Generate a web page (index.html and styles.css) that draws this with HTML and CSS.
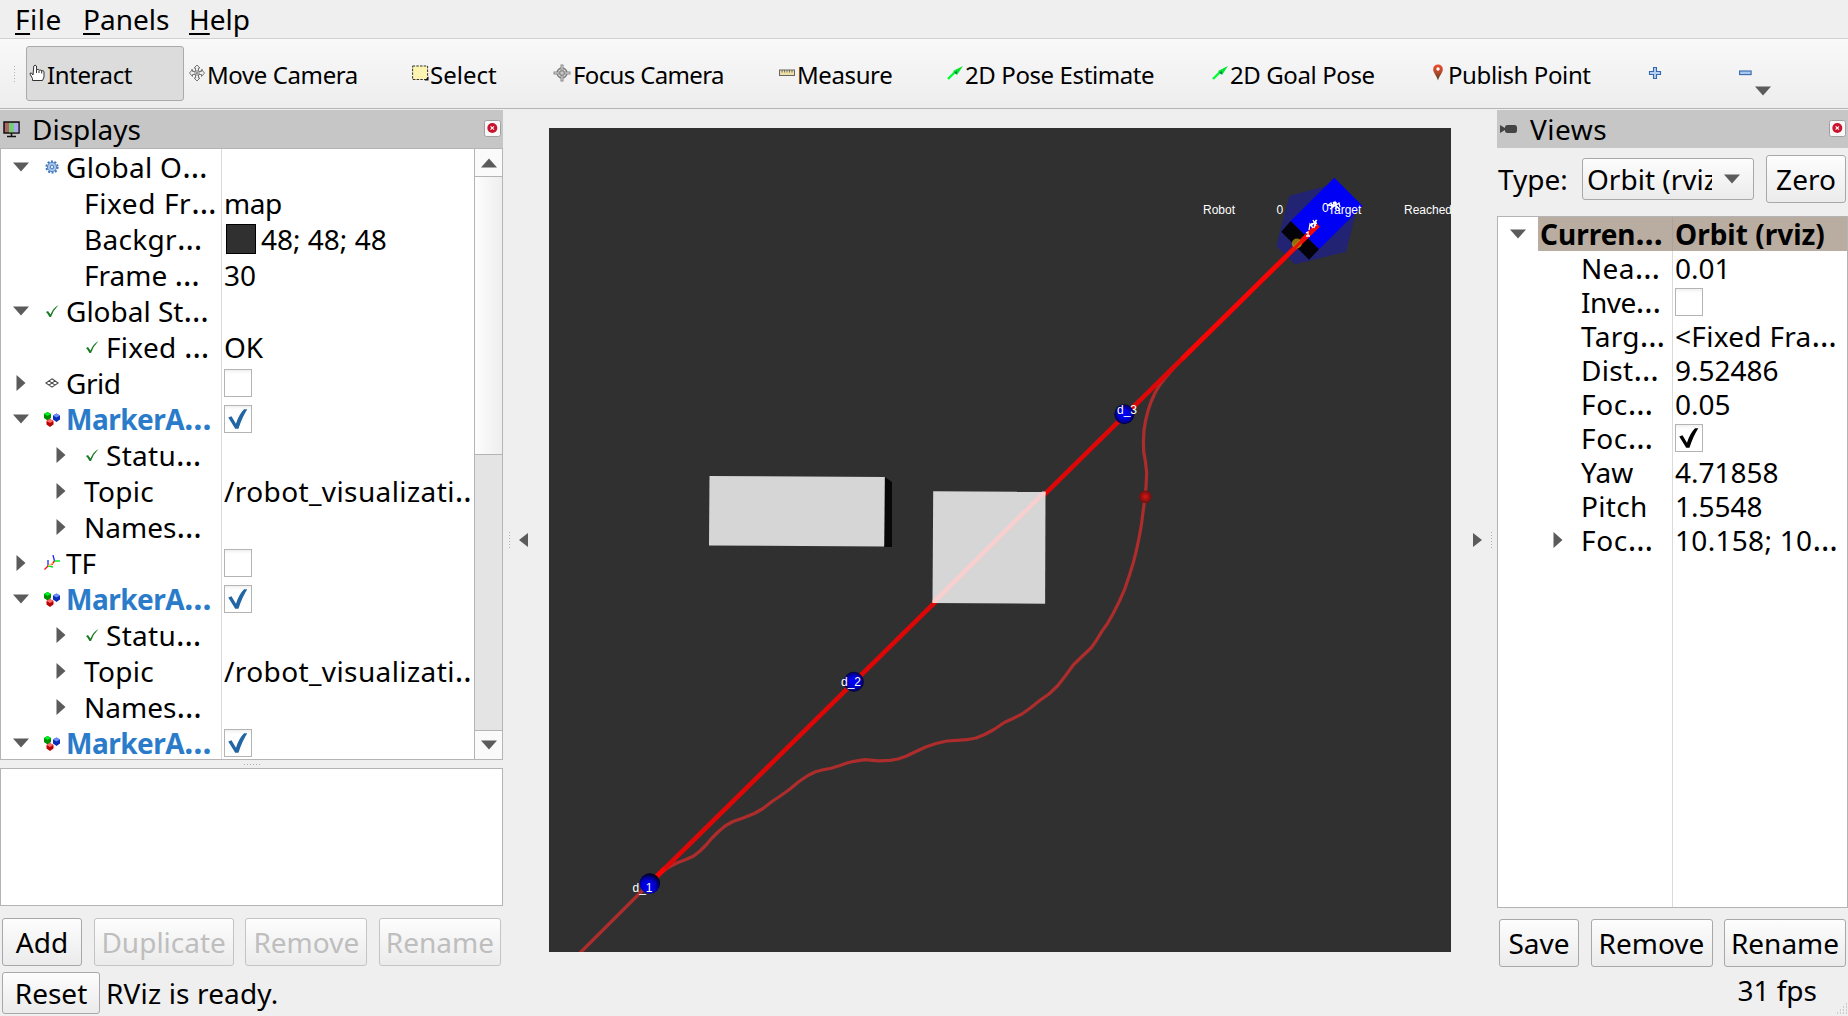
FILE: index.html
```html
<!DOCTYPE html>
<html lang="en">
<head>
<meta charset="utf-8">
<title>RViz</title>
<link rel="stylesheet" href="styles.css">
</head>
<body>
<svg class="defs" aria-hidden="true">
  <defs>
    <linearGradient id="pin" x1="0" y1="0" x2="0" y2="1"><stop offset="0" stop-color="#ef4a2c"/><stop offset=".5" stop-color="#b8482c"/><stop offset="1" stop-color="#4a3a20"/></linearGradient>
    <symbol id="i-down" viewBox="0 0 16 10"><path d="M0 .5h16L8 9.5z" fill="#5b5b5b"/></symbol>
    <symbol id="i-right" viewBox="0 0 10 16"><path d="M.5 0v16L9.500 8z" fill="#5b5b5b"/></symbol>
    <symbol id="i-ok" viewBox="0 0 14 14"><path d="M1 8l2-1 2.500 3.500Q8 4 13.500 1 8.500 6 6 13H4.500Q3 10 1 8z" fill="#1d7a26"/></symbol>
    <symbol id="i-gear" viewBox="0 0 14 14"><circle cx="7" cy="7" r="5.600" fill="none" stroke="#3f74b8" stroke-width="2" stroke-dasharray="2 1.520"/><circle cx="7" cy="7" r="4.600" fill="#a9c5ea" stroke="#5485c4"/><circle cx="7" cy="7" r="1.800" fill="#dbe7f7" stroke="#4a7cbe"/></symbol>
    <symbol id="i-grid" viewBox="0 0 14 10"><path d="M7 .8L13.200 5 7 9.200.8 5zM3.900 2.900l6.200 4.200M10.100 2.900L3.900 7.100" fill="none" stroke="#444" stroke-width="1.100"/></symbol>
    <symbol id="i-cubes" viewBox="0 0 16 16"><path d="M0 3l3.500-2L7 3v4L3.500 9.500 0 7z" fill="#008a00"/><path d="M0 3l3.500-2L7 3 3.500 5z" fill="#00f020"/><path d="M9 4.500L12.500 2.500 16 4.500v4L12.500 11 9 8.500z" fill="#0a2cb8"/><path d="M9 4.500L12.500 2.500 16 4.500l-3.500 2z" fill="#6d8cff"/><path d="M2.500 10L6 8l3.500 2v3.500L6 16l-3.500-2.500z" fill="#b80000"/><path d="M2.500 10L6 8l3.500 2L6 12z" fill="#ff6a6a"/></symbol>
    <symbol id="i-tf" viewBox="0 0 16 16"><g fill="none" stroke-width="1.300"><path d="M4 11V5M10.500 6L9 0" stroke="#22f"/><path d="M4 11l5 1M10.500 6H16" stroke="#0e2"/><path d="M4 11l-3.500 3.500M10.500 6L7.500 10" stroke="#e11"/><path d="M9 8l-5 3" stroke="#fb4"/></g></symbol>
    <symbol id="i-check" viewBox="0 0 28 28"><path d="M3.500 12.500l3.500-1.500 4.800 8Q15 9 20.500 3.500h3.500Q18.500 12 14.500 24.500H11z" fill="currentColor"/></symbol>
    <symbol id="i-close" viewBox="0 0 17 17"><rect x=".5" y=".5" width="16" height="16" rx="2" fill="#f8f8f8" stroke="#a0a0a0"/><circle cx="8.300" cy="8" r="5" fill="#c8142f"/><path d="M6.600 6.300l3.400 3.400M10 6.300L6.600 9.700" stroke="#fff" stroke-width="1.100"/></symbol>
    <symbol id="i-arrow" viewBox="0 0 16 14"><path d="M1 13l7-7" stroke="#0f3" stroke-width="2.400"/><path d="M6 5L16 0 10 9z" fill="#00e62e"/><path d="M7 7l3-2v3z" fill="#075"/></symbol>
  </defs>
</svg>

<nav class="menubar">
  <span class="t m1"><u>F</u>ile</span><span class="t m2"><u>P</u>anels</span><span class="t m3"><u>H</u>elp</span>
</nav>

<div class="toolbar">
  <i class="grip-v"></i>
  <button class="tool active"><svg width="16" height="18" viewBox="0 0 16 18"><path d="M4 11L2.500 9Q1 8.500 1 10l2.500 4.500V16.500h10L15 13V7.500Q14 6 12.800 7 12.500 5.500 10.500 6.200 9.500 4.800 7.500 5.800V2Q6 .2 4.800 2z" fill="#fff" stroke="#333"/><path d="M7.500 6v3M10 6.500V9M12.700 7v2.500" stroke="#333"/></svg><span class="t b1">Interact</span></button>
  <button class="tool move"><svg width="16" height="18" viewBox="0 0 16 18"><path d="M8 1l3 3H9.500v3.500H12.500V5.500L15.500 9l-3 3.500v-2H9.500V14H11l-3 3-3-3h1.500v-3.500H3.500v2L.5 9l3-3.500v2H6.500V4H5z" fill="#eee" stroke="#777"/><path d="M2 5.500l3 2M14 5.500l-3 2M8 6v6M5 9h6" stroke="#777"/></svg><span class="t b2">Move Camera</span></button>
  <button class="tool"><svg width="17" height="16" viewBox="0 0 17 16"><rect x=".6" y="1" width="15" height="13.500" fill="#fcf4b0" stroke="#333" stroke-dasharray="2.500 1.200"/><path d="M16.500 11.500v4h-4z" fill="#111"/></svg><span class="t b3">Select</span></button>
  <button class="tool"><svg width="18" height="18" viewBox="0 0 18 18"><circle cx="9" cy="9" r="5" fill="#ddd" stroke="#777" stroke-width="1.300"/><path d="M9 .5v17M.5 9h17" stroke="#888" stroke-width="3"/><path d="M9 1.500v15M1.500 9h15" stroke="#ddd"/><circle cx="9" cy="9" r="2.500" fill="none" stroke="#888"/></svg><span class="t b4">Focus Camera</span></button>
  <button class="tool"><svg width="16" height="8" viewBox="0 0 16 8"><rect x=".5" y="1" width="15" height="5.500" fill="#ece0a8" stroke="#666"/><path d="M3 1v2.500M5.500 1v2.500M8 1v2.500M10.500 1v2.500M13 1v2.500" stroke="#555" stroke-width=".8"/></svg><span class="t b5">Measure</span></button>
  <button class="tool"><svg width="16" height="14"><use href="#i-arrow"/></svg><span class="t b6">2D Pose Estimate</span></button>
  <button class="tool"><svg width="16" height="14"><use href="#i-arrow"/></svg><span class="t b7">2D Goal Pose</span></button>
  <button class="tool"><svg width="12" height="17" viewBox="0 0 12 17"><path d="M6 .5A4.700 4.700 0 0 1 10.800 5.200C10.800 9 7 12 6 16.500 5 12 1.200 9 1.200 5.200A4.700 4.700 0 0 1 6 .5z" fill="url(#pin)"/><circle cx="6" cy="5" r="1.700" fill="#fff"/></svg><span class="t b8">Publish Point</span></button>
  <button class="tool"><svg width="14" height="14" viewBox="0 0 14 14"><path d="M5.500 1.500h3v4h4v3h-4v4h-3v-4h-4v-3h4z" fill="#b5d0f2" stroke="#3568ae" stroke-width="1.100"/></svg></button>
  <button class="tool"><svg width="13" height="6" viewBox="0 0 13 6"><rect x=".6" y="1" width="11.500" height="3.600" fill="#a8c8f0" stroke="#3568ae" stroke-width="1.100"/></svg></button>
  <svg class="more" width="16" height="10"><use href="#i-down"/></svg>
</div>

<main class="work">
  <section class="dock left">
    <header class="title"><svg width="17" height="17" viewBox="0 0 17 17"><rect x="1" y="1" width="15" height="11" fill="#a66" stroke="#111" stroke-width="1.500"/><path d="M6 2h5v9.300H6z" fill="#7c7"/><path d="M11 2h4.300v9.300H11z" fill="#aae"/><path d="M8.500 12v3M4 15.500h9" stroke="#111" stroke-width="1.500"/></svg><span class="t h1">Displays</span><svg class="x" width="17" height="17"><use href="#i-close"/></svg></header>
    <div class="treebox">
      <div class="tree">
        <div class="row"><div class="name l0"><svg class="a"><use href="#i-down"/></svg><svg class="ic"><use href="#i-gear"/></svg><span class="t w3x">Global O<span class="e">…</span></span></div></div>
        <div class="row"><div class="name l1"><span class="t w6x">Fixed Fr<span class="e">…</span></span></div><div class="val"><span class="t n5x">map</span></div></div>
        <div class="row"><div class="name l1"><span class="t w3x">Backgr<span class="e">…</span></span></div><div class="val"><i class="swatch"></i><span class="t">48; 48; 48</span></div></div>
        <div class="row"><div class="name l1"><span class="t">Frame <span class="e">…</span></span></div><div class="val"><span class="t">30</span></div></div>
        <div class="row"><div class="name l0"><svg class="a"><use href="#i-down"/></svg><svg class="ic"><use href="#i-ok"/></svg><span class="t">Global St<span class="e">…</span></span></div></div>
        <div class="row"><div class="name l1"><svg class="ic"><use href="#i-ok"/></svg><span class="t w3x">Fixed <span class="e">…</span></span></div><div class="val"><span class="t">OK</span></div></div>
        <div class="row"><div class="name l0"><svg class="a"><use href="#i-right"/></svg><svg class="ic flat"><use href="#i-grid"/></svg><span class="t n5x">Grid</span></div><div class="val"><i class="box"></i></div></div>
        <div class="row"><div class="name l0 on"><svg class="a"><use href="#i-down"/></svg><svg class="ic big"><use href="#i-cubes"/></svg><span class="t n5x">MarkerA<span class="e">…</span></span></div><div class="val"><i class="box"><svg><use href="#i-check"/></svg></i></div></div>
        <div class="row"><div class="name l1"><svg class="a"><use href="#i-right"/></svg><svg class="ic"><use href="#i-ok"/></svg><span class="t w3x">Statu<span class="e">…</span></span></div></div>
        <div class="row"><div class="name l1"><svg class="a"><use href="#i-right"/></svg><span class="t w3x">Topic</span></div><div class="val"><span class="t w4x">/robot_visualizati<span class="e">…</span></span></div></div>
        <div class="row"><div class="name l1"><svg class="a"><use href="#i-right"/></svg><span class="t">Names<span class="e">…</span></span></div></div>
        <div class="row"><div class="name l0"><svg class="a"><use href="#i-right"/></svg><svg class="ic big"><use href="#i-tf"/></svg><span class="t">TF</span></div><div class="val"><i class="box"></i></div></div>
        <div class="row"><div class="name l0 on"><svg class="a"><use href="#i-down"/></svg><svg class="ic big"><use href="#i-cubes"/></svg><span class="t n5x">MarkerA<span class="e">…</span></span></div><div class="val"><i class="box"><svg><use href="#i-check"/></svg></i></div></div>
        <div class="row"><div class="name l1"><svg class="a"><use href="#i-right"/></svg><svg class="ic"><use href="#i-ok"/></svg><span class="t w3x">Statu<span class="e">…</span></span></div></div>
        <div class="row"><div class="name l1"><svg class="a"><use href="#i-right"/></svg><span class="t w3x">Topic</span></div><div class="val"><span class="t w4x">/robot_visualizati<span class="e">…</span></span></div></div>
        <div class="row"><div class="name l1"><svg class="a"><use href="#i-right"/></svg><span class="t">Names<span class="e">…</span></span></div></div>
        <div class="row"><div class="name l0 on"><svg class="a"><use href="#i-down"/></svg><svg class="ic big"><use href="#i-cubes"/></svg><span class="t n5x">MarkerA<span class="e">…</span></span></div><div class="val"><i class="box"><svg><use href="#i-check"/></svg></i></div></div>
      </div>
      <div class="scroll"><div class="sb up"><svg width="16" height="10"><use href="#i-down"/></svg></div><div class="thumb"></div><div class="track"></div><div class="sb down"><svg width="16" height="10"><use href="#i-down"/></svg></div></div>
    </div>
    <div class="split"><i class="grip-h"></i></div>
    <div class="desc"></div>
    <div class="buttons"><button class="btn"><span class="t">Add</span></button><button class="btn off"><span class="t">Duplicate</span></button><button class="btn off"><span class="t">Remove</span></button><button class="btn off"><span class="t">Rename</span></button></div>
  </section>

  <div class="handle lh"><i class="grip-v small"></i><svg width="9" height="14" viewBox="0 0 9 14"><path d="M9 0v14L0 7z" fill="#5b5b5b"/></svg></div>

  <svg class="scene" viewBox="549 128 902 824" width="902" height="824">
    <defs>
      <radialGradient id="ball"><stop offset="0" stop-color="#00f"/><stop offset=".5" stop-color="#0000dc"/><stop offset=".8" stop-color="#000090"/><stop offset="1" stop-color="#000030"/></radialGradient>
      <radialGradient id="ball1" cx=".42" cy=".65" r=".65"><stop offset="0" stop-color="#00f"/><stop offset=".5" stop-color="#0000d0"/><stop offset=".85" stop-color="#000050"/><stop offset="1" stop-color="#00000c"/></radialGradient>
      <radialGradient id="rball"><stop offset="0" stop-color="#e01212"/><stop offset="1" stop-color="#6a1212"/></radialGradient>
    </defs>
    <rect x="549" y="128" width="902" height="824" fill="#303030"/>
    <path d="M1289.300 195.700L1334 184l21 33-9 34.700-51 12.600-18.700-18.300z" fill="#232373"/>
    <path d="M1334.300 177.700l28.400 28.300-43.700 43.300-28.300-28.300z" fill="#0000f4"/>
    <path d="M1290.700 221l28.300 28.300-10 10.400-27.700-28z" fill="#020208"/>
    <polyline fill="none" stroke="#ad2c2c" stroke-width="3.200" stroke-linejoin="round" points="580,953 649,884 661,873 669,867 678,862.500 686,859.500 693.600,856 700,851 706,845 712,838 718.600,831.500 725,826 733,821.500 743,818 754.300,813.500 763,808.500 772,801.500 781,795.500 790,789 799,781.500 807.900,775.500 815,772 822,770 831,768.300 840,765.500 847,763 854,761.300 865,759.700 878,760.800 890,760.300 898,759 906,756.300 916,751.500 925.700,747 936,743.500 947,741 957,740.300 966.800,739.700 976,738 984.600,734.500 994,729.500 1004.300,722.500 1013,718.500 1022,714 1031,707.500 1040,700.300 1049,694 1057.900,685.500 1066,675 1073.300,665 1082,656.500 1091,648 1096,641 1101.700,631.700 1107.500,623.500 1113.300,613.300 1119.500,601 1125,588.300 1129.500,575 1133.300,562.700 1136.500,550 1139.300,536.700 1141.500,524 1143.300,510 1145,497 1146,486.700 1146.700,473 1145.500,462 1143.700,451.700 1143.400,441 1144,430 1145.700,420 1148.300,410 1151,402 1155,393 1159,386 1164,379.500 1172,370 1190,349.500"/>
    <path d="M649 884L1318 225" stroke="#dc0808" stroke-width="4.600"/>
    <path d="M1182 359L1318 225" stroke="#f60505" stroke-width="4.600"/>
    <path d="M649 884l16-15.800" stroke="#f60505" stroke-width="4.600"/>
    <circle cx="1296.800" cy="243.500" r="5" fill="#b89a08" opacity=".75"/>
    <path d="M1290 252.600l14-13.800" stroke="#e81408" stroke-width="3"/>
    <path d="M885 477l7 5v65h-8z" fill="#080808"/>
    <path d="M709.500 476l175.300 1-.6 69.500-175.200-1z" fill="#d6d6d6"/>
    <path d="M933.200 491.200l112.300.6-.4 111.900-112.600-.7z" fill="#d6d6d6"/>
    <path d="M932.600 603v-3l109.500-108.600h3.400v2.600L936.500 603z" fill="#f8cfcf"/>
    <circle cx="649.800" cy="883.500" r="10.300" fill="url(#ball1)"/>
    <circle cx="853.800" cy="681.700" r="10" fill="url(#ball)"/>
    <circle cx="1124.300" cy="414.300" r="10" fill="url(#ball)"/>
    <circle cx="1145.300" cy="496.700" r="6.300" fill="url(#rball)"/>
    <path d="M1327 206l4-3 1 3 3-4 1 3 3-2 1 4M1330 209l9-6M1333 202l7 8M1336 202v8M1309 230l1-6 3 4M1311 226l6-6M1311 224l6-1M1313 220l3 6M1314 228l2-8M1306 233l2-1v4M1306 236h4" fill="none" stroke="#fff" stroke-width="1.300"/>
    <g class="labels"><text x="632.500" y="892">d_1</text><text x="841" y="686">d_2</text><text x="1117" y="414">d_3</text><text x="1203" y="213.500">Robot</text><text x="1276.500" y="213.500">0</text><text x="1322" y="212">0</text><text x="1328" y="213.500">Target</text><text x="1404" y="213.500">Reached</text></g>
  </svg>

  <div class="handle rh"><svg width="9" height="14" viewBox="0 0 9 14"><path d="M0 0v14l9-7z" fill="#5b5b5b"/></svg><i class="grip-v small"></i></div>

  <section class="dock right">
    <header class="title"><svg width="17" height="10" viewBox="0 0 17 10"><path d="M0 1l5 3V6L0 9z" fill="#444"/><rect x="5" y="1" width="12" height="8" rx="2.500" fill="#444"/></svg><span class="t h2">Views</span><svg class="x" width="17" height="17"><use href="#i-close"/></svg></header>
    <div class="typebar"><span class="t y1">Type:</span><div class="combo"><div class="clip"><span class="t">Orbit (rviz)</span></div><svg width="16" height="10"><use href="#i-down"/></svg></div><button class="btn"><span class="t">Zero</span></button></div>
    <div class="tree views">
      <div class="row cur"><div class="name"><svg class="a"><use href="#i-down"/></svg><span class="t">Curren<span class="e">…</span></span></div><div class="val"><span class="t">Orbit (rviz)</span></div></div>
      <div class="row"><div class="name"><span class="t w3x">Nea<span class="e">…</span></span></div><div class="val"><span class="t">0.01</span></div></div>
      <div class="row"><div class="name"><span class="t n5x">Inve<span class="e">…</span></span></div><div class="val"><i class="box"></i></div></div>
      <div class="row"><div class="name"><span class="t w3x">Targ<span class="e">…</span></span></div><div class="val"><span class="t w3x">&lt;Fixed Fra<span class="e">…</span></span></div></div>
      <div class="row"><div class="name"><span class="t w3x">Dist<span class="e">…</span></span></div><div class="val"><span class="t">9.52486</span></div></div>
      <div class="row"><div class="name"><span class="t w6x">Foc<span class="e">…</span></span></div><div class="val"><span class="t">0.05</span></div></div>
      <div class="row"><div class="name"><span class="t w6x">Foc<span class="e">…</span></span></div><div class="val"><i class="box black"><svg><use href="#i-check"/></svg></i></div></div>
      <div class="row"><div class="name"><span class="t">Yaw</span></div><div class="val"><span class="t">4.71858</span></div></div>
      <div class="row"><div class="name"><span class="t w3x">Pitch</span></div><div class="val"><span class="t">1.5548</span></div></div>
      <div class="row"><div class="name"><svg class="a"><use href="#i-right"/></svg><span class="t w6x">Foc<span class="e">…</span></span></div><div class="val"><span class="t w3x">10.158; 10<span class="e">…</span></span></div></div>
    </div>
    <div class="buttons"><button class="btn"><span class="t">Save</span></button><button class="btn"><span class="t">Remove</span></button><button class="btn"><span class="t">Rename</span></button></div>
  </section>
</main>

<footer class="status"><button class="btn"><span class="t">Reset</span></button><span class="t s2">RViz is ready.</span><span class="t s3">31 fps</span><svg class="size" width="12" height="12" viewBox="0 0 12 12"><path d="M10 1h1M7 4h1M10 4h1M4 7h1M7 7h1M10 7h1M1 10h1M4 10h1M7 10h1M10 10h1" stroke="#aaa" stroke-width="1.200"/></svg></footer>
</body>
</html>
```
FILE: styles.css
```css
* { box-sizing: border-box; }
body { margin: 0; width: 1848px; height: 1016px; overflow: hidden; background: #efefef; color: #000; font: 28px/34px "Noto Sans", "Open Sans", sans-serif; display: flex; flex-direction: column; }
.defs { position: absolute; width: 0; height: 0; }
svg { display: block; flex: none; }
button { font: inherit; color: inherit; padding: 0; }
.t { white-space: pre; flex: none; }
.e { font-size: 32px; line-height: 0; letter-spacing: 0; }
.w3x { letter-spacing: .3px; }
.w4x { letter-spacing: .4px; }
.w6x { letter-spacing: .6px; }
.n5x { letter-spacing: -.5px; }
.menubar { flex: none; height: 39px; border-bottom: 1px solid #d2d2d2; display: flex; padding: 2px 0 0 15px; }
.menubar .m1 { width: 68px; letter-spacing: .5px; }
.menubar .m2 { width: 106px; }
.menubar u { text-decoration-thickness: 2px; text-underline-offset: 3px; text-decoration-skip-ink: none; }
.toolbar { flex: none; height: 70px; border-bottom: 1px solid #b4b4b4; background: linear-gradient(#f9f9f9, #ededed); display: grid; grid-template-columns: 26px 158px 225px 141px 226px 168px 265px 220px 216px 91px 112px; align-items: center; position: relative; font-size: 24px; letter-spacing: -.4px; }
.tool { height: 55px; border: 1px solid transparent; border-radius: 3px; background: none; display: flex; align-items: center; gap: 2px; padding: 0 0 2px 2px; text-align: left; letter-spacing: inherit; }
.tool .t { padding-top: 4px; }
.tool.active { background: #dcdcdc; border-color: #aaa; }
.tool.move { padding-left: 4px; }
.b3 { margin-left: -1px; letter-spacing: 0; }
.b4 { letter-spacing: -.65px; }
.b8 { margin-left: 2px; }
.more { position: absolute; left: 1755px; top: 47px; }
.grip-v { width: 4px; height: 17px; margin-left: 13px; background: radial-gradient(circle, #b0b0b0 .7px, transparent 1px) 0 0 / 3px 3px; }
.grip-v.small { width: 2px; margin: 0; }
.grip-h { width: 17px; height: 2px; background: radial-gradient(circle, #b0b0b0 .7px, transparent 1px) 0 0 / 3px 3px; }
.work { flex: none; height: 862px; padding-top: 1px; display: flex; align-items: flex-start; }
.left { width: 503px; }
.right { width: 351px; }
.dock { flex: none; height: 861px; display: flex; flex-direction: column; }
.title { flex: none; height: 38px; background: #c6c6c6; display: flex; align-items: center; padding: 0 2px 0 3px; gap: 12px; }
.title .x { margin-left: auto; margin-bottom: 2px; }
.h2 { margin-left: 1px; letter-spacing: .5px; }
.treebox { flex: none; height: 612px; border: 1px solid #b4b4b4; background: #fff; display: flex; overflow: hidden; }
.tree { flex: 1; min-width: 0; margin-right: 2px; overflow: hidden; background: linear-gradient(#dadada, #dadada) 220px 0 / 1px 100% no-repeat; }
.row { height: 36px; display: flex; }
.name { width: 220px; flex: none; display: flex; align-items: center; }
.name .t { margin-left: -1px; }
.val { flex: 1; min-width: 0; overflow: hidden; display: flex; align-items: center; padding-left: 3px; }
.l0 { padding-left: 66px; }
.l1 { padding-left: 84px; }
.name .a { width: 16px; height: 16px; margin-left: -54px; margin-right: 38px; }
.l1 .a { margin-left: -32px; margin-right: 16px; }
.l0 .ic { margin-left: -22px; }
.ic { width: 14px; height: 14px; margin-right: 8px; }
.l0 .ic.big { width: 16px; height: 16px; margin-left: -23px; margin-right: 7px; }
.on { color: #2a7bca; font-weight: 700; }
.box { width: 28px; height: 28px; border: 1px solid #b4b4b4; background: linear-gradient(#f0f0f0, #fff 4px); color: #2265a3; }
.box svg { width: 26px; height: 26px; }
.box.black { color: #000; }
.swatch { width: 30px; height: 30px; margin: 0 5px 0 2px; background: #303030; border: 1px solid #000; }
.scroll { width: 28px; border-left: 1px solid #b4b4b4; display: flex; flex-direction: column; }
.sb { height: 28px; display: grid; place-items: center; background: #fafafa; }
.up { border-bottom: 1px solid #b4b4b4; }
.up svg { transform: scaleY(-1); }
.thumb { height: 278px; background: linear-gradient(90deg, #fdfdfd, #eee); border-bottom: 1px solid #b4b4b4; }
.track { flex: 1; background: #e4e4e4; border-bottom: 1px solid #b4b4b4; }
.split { height: 8px; display: grid; place-items: center; }
.desc { height: 138px; border: 1px solid #b4b4b4; background: #fff; }
.buttons { display: flex; justify-content: space-between; padding: 12px 2px 0; }
.btn { height: 48px; border: 1px solid #a8a8a8; border-radius: 3px; background: linear-gradient(#fdfdfd, #ebebeb); display: flex; align-items: center; justify-content: center; width: 122px; }
.btn:first-child { width: 80px; }
.btn:nth-child(2) { width: 140px; }
.off { color: #bebebe; border-color: #c4c4c4; }
.handle { flex: none; width: 46px; height: 859px; display: flex; align-items: center; gap: 9px; }
.lh { padding-left: 5px; }
.rh { padding-left: 22px; gap: 8px; }
.scene { margin-top: 18px; }
.labels { font: 12px "Liberation Sans", Arial, sans-serif; fill: #fff; }
.typebar { height: 68px; display: flex; align-items: center; padding: 0 2px 7px 1px; }
.combo { width: 172px; height: 42px; margin-left: auto; border: 1px solid #a8a8a8; border-radius: 3px; background: linear-gradient(#fdfdfd, #ebebeb); display: flex; align-items: center; padding-left: 4px; gap: 12px; }
.clip { width: 125px; overflow: hidden; display: flex; }
.typebar .btn { width: 80px; margin-left: 12px; }
.views { flex: none; height: 692px; margin-right: 0; border: 1px solid #b4b4b4; background: #fff linear-gradient(#dadada, #dadada) 174px 0 / 1px 100% no-repeat; }
.views .row { height: 34px; }
.views .name { width: 174px; padding-left: 84px; }
.views .name .a { margin-left: -32px; margin-right: 16px; }
.cur { font-weight: 700; background: linear-gradient(90deg, transparent 40px, #b9aca1 40px 174px, #aea197 174px 175px, #b9aca1 175px); }
.views .cur .name { padding-left: 43px; }
.views .cur .name .a { margin-left: -31px; margin-right: 15px; }
.right .buttons { padding-top: 11px; }
.right .buttons .btn:nth-child(2) { width: 122px; }
.status { flex: 1; display: flex; align-items: center; padding: 0 2px 1px; position: relative; }
.status .btn { width: 98px; height: 42px; }
.s2 { margin-left: 6px; letter-spacing: .15px; }
.s3 { margin-left: auto; margin-right: 29px; padding-bottom: 7px; }
.size { position: absolute; right: 0; bottom: 1px; }
```
